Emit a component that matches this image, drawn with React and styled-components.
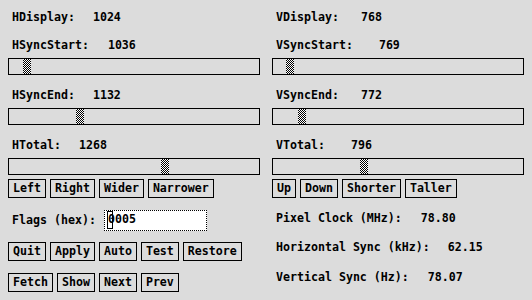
import React from "react";
import styled, { createGlobalStyle } from "styled-components";

const GlobalStyle = createGlobalStyle`
  html, body {
    margin: 0;
    padding: 0;
    background: #dcdcdc;
  }
  body {
    font-family: "DejaVu Sans Mono", "Liberation Mono", monospace;
    font-weight: bold;
    font-size: 11.62px;
    line-height: 13px;
    color: #000;
  }
`;

const Window = styled.div`
  width: 532px;
  height: 300px;
  box-sizing: border-box;
  padding: 11px 8px 0 8px;
  display: grid;
  grid-template-columns: 252px 252px;
  column-gap: 12px;
  align-items: start;
  background: #dcdcdc;
  overflow: hidden;
`;

const Column = styled.div`
  display: flex;
  flex-direction: column;
`;

const Field = styled.div`
  display: flex;
  height: 13px;
  padding-left: 4px;
  margin-top: ${p => p.$mt || 0}px;
  white-space: pre;
`;

const Value = styled.span`
  margin-left: ${p => p.$gap}px;
`;

const Trough = styled.div`
  display: flex;
  height: 17px;
  margin-top: 6px;
  box-sizing: border-box;
  border: 1px solid #000;
`;

const Thumb = styled.div`
  width: 8px;
  margin-left: ${p => p.$at}px;
  background: repeating-conic-gradient(#000 0 25%, #fff 0 50%) 0 0 / 2px 2px;
`;

const ButtonRow = styled.div`
  display: flex;
  gap: 4px;
  margin-top: ${p => p.$mt}px;
`;

const Button = styled.button`
  font: inherit;
  color: #000;
  background: transparent;
  border: 1px solid #000;
  border-radius: 0;
  margin: 0;
  padding: 2px 4px;
  height: 19px;
  line-height: 13px;
  white-space: pre;
  cursor: pointer;
`;

const FlagsRow = styled.div`
  display: flex;
  align-items: center;
  height: 21px;
  margin-top: 12px;
  padding-left: 4px;
  white-space: pre;
`;

const FlagsLabel = styled.span`
  width: 92px;
`;

const HexBox = styled.div`
  width: 103px;
  height: 21px;
  box-sizing: border-box;
  border: 1px dotted #000;
  background: #fff;
  padding: 2px 3px 4px;
  white-space: pre;
`;

const Caret = styled.span`
  position: relative;
  &::before {
    content: "";
    position: absolute;
    left: -1px;
    top: -1px;
    width: 4px;
    height: 16px;
    border: 1px solid #000;
  }
`;

function Slider({ label, value, gap, at, mt }) {
  return <>
    <Field $mt={mt}>
      <span>{label}</span>
      <Value $gap={gap}>{value}</Value>
    </Field>
    <Trough>
      <Thumb $at={at}/>
    </Trough>
  </>;
}

export default function App() {
  return <>
    <GlobalStyle/>
    <Window>
      <Column>
        <Field>
          <span>HDisplay:</span>
          <Value $gap={18}>1024</Value>
        </Field>
        <Slider label="HSyncStart:" value="1036" gap={19} at={14} mt={15}/>
        <Slider label="HSyncEnd:" value="1132" gap={18} at={67} mt={14}/>
        <Slider label="HTotal:" value="1268" gap={18} at={152} mt={14}/>
        <ButtonRow $mt={4}>
          <Button>Left</Button>
          <Button>Right</Button>
          <Button>Wider</Button>
          <Button>Narrower</Button>
        </ButtonRow>
        <FlagsRow>
          <FlagsLabel>Flags (hex):</FlagsLabel>
          <HexBox><Caret>0</Caret>005</HexBox>
        </FlagsRow>
        <ButtonRow $mt={11}>
          <Button>Quit</Button>
          <Button>Apply</Button>
          <Button>Auto</Button>
          <Button>Test</Button>
          <Button>Restore</Button>
        </ButtonRow>
        <ButtonRow $mt={12}>
          <Button>Fetch</Button>
          <Button>Show</Button>
          <Button>Next</Button>
          <Button>Prev</Button>
        </ButtonRow>
      </Column>
      <Column>
        <Field>
          <span>VDisplay:</span>
          <Value $gap={22}>768</Value>
        </Field>
        <Slider label="VSyncStart:" value="769" gap={26} at={13} mt={15}/>
        <Slider label="VSyncEnd:" value="772" gap={22} at={25} mt={14}/>
        <Slider label="VTotal:" value="796" gap={26} at={87} mt={14}/>
        <ButtonRow $mt={4}>
          <Button>Up</Button>
          <Button>Down</Button>
          <Button>Shorter</Button>
          <Button>Taller</Button>
        </ButtonRow>
        <Field $mt={14}>
          <span>Pixel Clock (MHz):</span>
          <Value $gap={19}>78.80</Value>
        </Field>
        <Field $mt={16}>
          <span>Horizontal Sync (kHz):</span>
          <Value $gap={18}>62.15</Value>
        </Field>
        <Field $mt={17}>
          <span>Vertical Sync (Hz):</span>
          <Value $gap={19}>78.07</Value>
        </Field>
      </Column>
    </Window>
  </>;
}
